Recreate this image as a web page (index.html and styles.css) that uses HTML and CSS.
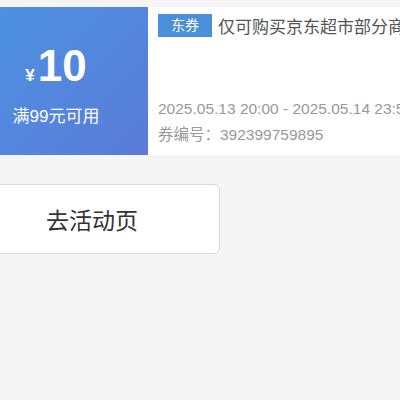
FILE: index.html
```html
<!DOCTYPE html>
<html>
<head>
<meta charset="utf-8">
<link rel="stylesheet" href="styles.css">
</head>
<body>
<div class="page">
  <div class="card">
    <div class="value">
      <div class="amount"><span class="yen">¥</span><span class="num">10</span></div>
      <div class="cond">满99元可用</div>
    </div>
    <div class="info">
      <div class="title-row"><span class="tag">东券</span><span class="title">仅可购买京东超市部分商品</span></div>
      <div class="meta">
        <div class="line">2025.05.13 20:00 - 2025.05.14 23:59</div>
        <div class="line">券编号：392399759895</div>
      </div>
    </div>
  </div>
  <div class="btn">去活动页</div>
</div>
</body>
</html>
```
FILE: styles.css
```css
html, body {
  margin: 0;
  padding: 0;
  background: #f5f5f5;
  font-family: "Liberation Sans", "Noto Sans CJK SC", sans-serif;
  overflow: hidden;
}
.page {
  margin-left: -36px;
  padding-top: 7px;
  width: 436px;
}
.card {
  display: flex;
  height: 148px;
  background: #fff;
}
.value {
  width: 184px;
  flex: none;
  background: linear-gradient(135deg, #4a93e2 0%, #5b7cd8 100%);
  color: #fff;
  display: flex;
  flex-direction: column;
  align-items: center;
  justify-content: center;
}
.amount {
  display: flex;
  align-items: baseline;
  height: 44px;
  margin-top: 10px;
}
.yen {
  font-size: 17px;
  font-weight: bold;
  margin-right: 3px;
}
.num {
  font-size: 44px;
  font-weight: bold;
  line-height: 44px;
}
.cond {
  font-size: 17px;
  margin-top: 18px;
  line-height: 22px;
}
.info {
  flex: 1;
  min-width: 0;
  padding: 7px 10px;
  display: flex;
  flex-direction: column;
  justify-content: space-between;
  white-space: nowrap;
  overflow: hidden;
}
.title-row {
  display: flex;
  align-items: center;
  height: 23px;
}
.tag {
  background: #4a8fd8;
  color: #fff;
  font-size: 14px;
  width: 54px;
  height: 23px;
  line-height: 23px;
  text-align: center;
  flex: none;
}
.title {
  font-size: 17px;
  color: #555;
  margin-left: 6px;
}
.line {
  font-size: 15.5px;
  color: #999;
  line-height: 26px;
}
.btn {
  margin-top: 29px;
  width: 254px;
  height: 68px;
  border: 1px solid #d9d9d9;
  border-radius: 6px;
  background: #fff;
  display: flex;
  align-items: center;
  justify-content: center;
  font-size: 23px;
  color: #333;
}
```
